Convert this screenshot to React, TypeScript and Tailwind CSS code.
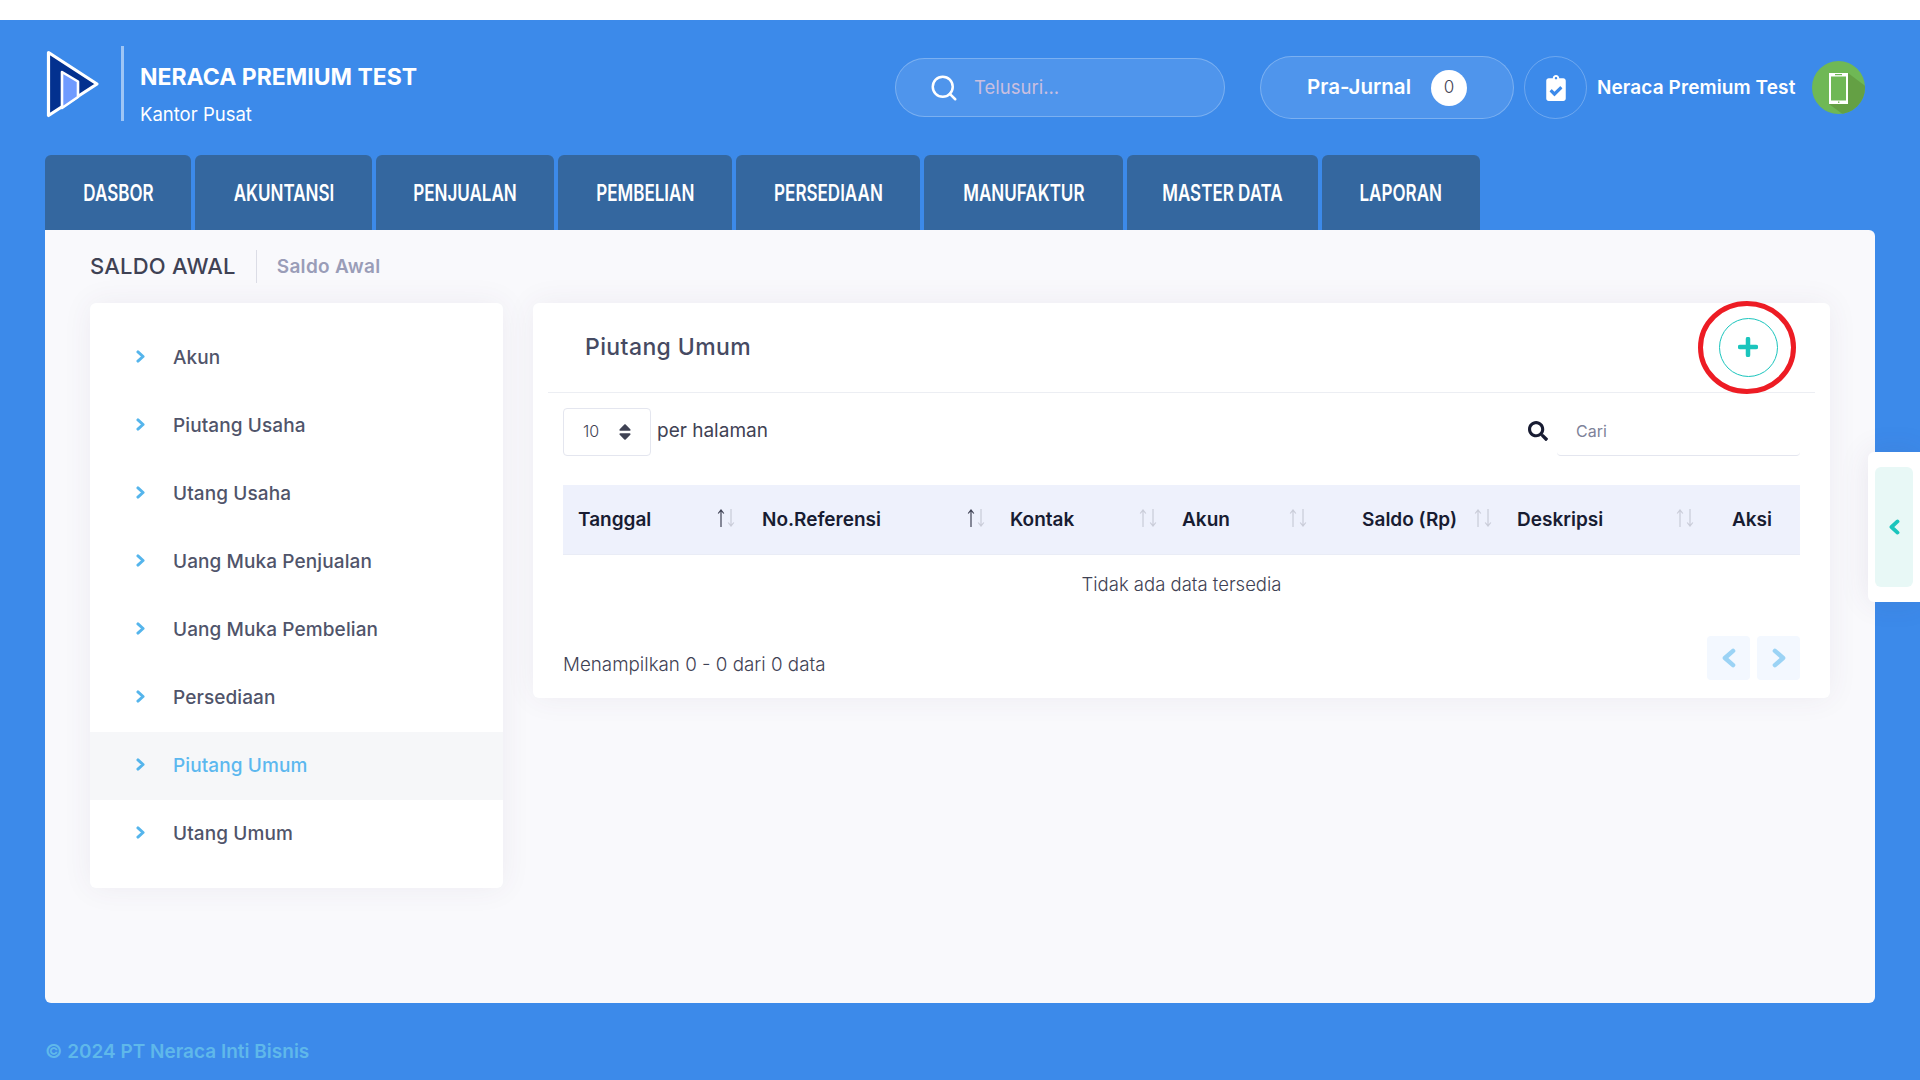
import { FaClipboardCheck, FaSearch, FaSort } from "react-icons/fa";
import { Search } from "lucide-react";

const tabs = [
    { label: "DASBOR", width: "w-[146px]" },
    { label: "AKUNTANSI", width: "w-[177px]" },
    { label: "PENJUALAN", width: "w-[178px]" },
    { label: "PEMBELIAN", width: "w-[174px]" },
    { label: "PERSEDIAAN", width: "w-[184px]" },
    { label: "MANUFAKTUR", width: "w-[199px]" },
    { label: "MASTER DATA", width: "w-[191px]" },
    { label: "LAPORAN", width: "w-[158px]" },
];

const menu = ["Akun", "Piutang Usaha", "Utang Usaha", "Uang Muka Penjualan", "Uang Muka Pembelian", "Persediaan", "Piutang Umum", "Utang Umum"];

function Chevron({ left, w, h, sw }: { left?: boolean; w: number; h: number; sw: number }) {
    const p = sw * 0.65;
    const d = left ? `M${w - p} ${p} L${p} ${h / 2} L${w - p} ${h - p}` : `M${p} ${p} L${w - p} ${h / 2} L${p} ${h - p}`;
    return (
        <svg width={w} height={h} viewBox={`0 0 ${w} ${h}`} fill="none" className="shrink-0">
            <path d={d} stroke="currentColor" strokeWidth={sw} strokeLinejoin="round" strokeLinecap="round" />
        </svg>
    );
}

function Logo() {
    return (
        <svg width="56" height="72" viewBox="0 0 56 72" className="shrink-0">
            <path d="M3.5 4.5 L52 36 L3.5 67.5 Z" fill="#03318f" stroke="#fff" strokeWidth="3.2" strokeLinejoin="round" />
            <path d="M17 24 L33 33.5 L33 49 L17 60 Z" fill="#6f9bff" stroke="#fff" strokeWidth="2.6" strokeLinejoin="round" />
        </svg>
    );
}

function Avatar() {
    return (
        <svg width="53" height="53" viewBox="0 0 53 53" className="shrink-0">
            <defs>
                <clipPath id="avatar-clip">
                    <circle cx="26.5" cy="26.5" r="26.5" />
                </clipPath>
            </defs>
            <circle cx="26.5" cy="26.5" r="26.5" fill="#6fb855" />
            <path d="M36 12 L60 30 L60 60 L40 60 L17 43 Z" fill="#64a044" clipPath="url(#avatar-clip)" />
            <rect x="17" y="12" width="19" height="31" fill="#fff" />
            <rect x="19" y="15.5" width="15" height="24" fill="#6fb855" />
            <rect x="23" y="13" width="7" height="1.2" fill="#6fb855" />
            <rect x="26" y="40.5" width="1.4" height="1.4" fill="#6fb855" />
        </svg>
    );
}

function SortArrows({ active }: { active?: boolean }) {
    return (
        <svg width="18" height="18" viewBox="0 0 18 18" className="shrink-0" fill="none" strokeWidth="1.2">
            <path d="M4 18 V1 M1.2 4.5 L4 1 L6.8 4.5" stroke={active ? "#3f4254" : "#c9ccd8"} />
            <path d="M14 0 V17 M11.2 13.5 L14 17 L16.8 13.5" stroke="#c9ccd8" />
        </svg>
    );
}

function Th({ label, width, active, pad }: { label: string; width: string; active?: boolean; pad?: string }) {
    return (
        <div className={`${width} ${pad ?? "pl-[15px]"} flex items-center justify-between pr-[10px]`}>
            <span className="mt-[1px]">{label}</span>
            <span className="-mt-[4px]">
                <SortArrows active={active} />
            </span>
        </div>
    );
}

export default function App() {
    return (
        <div className="relative h-[1080px] w-full overflow-hidden bg-[#3c8aea] [font-family:Inter,sans-serif]">
            <div className="h-[20px] bg-white"></div>

            <div className="flex h-[135px] items-center justify-between pl-[45px] pr-[55px]">
                <div className="mb-[8px] flex items-center">
                    <Logo />
                    <div className="ml-[20px] h-[75px] w-[3px] bg-white/50"></div>
                    <div className="ml-[16px] mt-[20px] flex flex-col text-white">
                        <span className="text-[23px] font-bold leading-[30px]">NERACA PREMIUM TEST</span>
                        <span className="mt-[10px] text-[18.5px] leading-[24px]">Kantor Pusat</span>
                    </div>
                </div>

                <div className="flex items-center">
                    <div className="flex h-[59px] w-[330px] items-center rounded-full border border-white/25 bg-white/10 pl-[33px]">
                        <Search size={30} strokeWidth={2} className="text-white" />
                        <span className="ml-[15px] text-[18.5px] text-[#c9bfe0]">Telusuri...</span>
                    </div>
                    <div className="ml-[35px] flex h-[63px] w-[254px] items-center rounded-full border border-white/25 bg-white/10 pl-[46px]">
                        <span className="w-[124px] whitespace-nowrap text-[20.5px] font-semibold text-white">Pra-Jurnal</span>
                        <span className="flex h-[36px] w-[36px] items-center justify-center rounded-full bg-white text-[17px] font-light text-[#3f4254]">0</span>
                    </div>
                    <div className="ml-[10px] flex h-[63px] w-[63px] items-center justify-center rounded-full border border-white/25">
                        <FaClipboardCheck size={26} className="text-white" />
                    </div>
                    <span className="ml-[10px] mt-[1px] w-[200px] whitespace-nowrap text-[19px] font-semibold tracking-[0.1px] text-white">Neraca Premium Test</span>
                    <span className="ml-[15px]">
                        <Avatar />
                    </span>
                </div>
            </div>

            <div className="ml-[45px] flex h-[75px] gap-[4px]">
                {tabs.map((tab) => (
                    <div key={tab.label} className={`${tab.width} flex items-center justify-center rounded-t-[6px] bg-[#34679f] text-white`}>
                        <span className="mt-[1px] inline-block scale-x-[0.74] whitespace-nowrap text-[23px] font-semibold">{tab.label}</span>
                    </div>
                ))}
            </div>

            <div className="ml-[45px] h-[773px] w-[1830px] rounded-b-[6px] rounded-tr-[6px] bg-[#f9f9fc] px-[45px]">
                <div className="flex h-[73px] items-center">
                    <span className="text-[22px] font-medium tracking-[0.2px] text-[#3f4254]">SALDO AWAL</span>
                    <div className="ml-[20px] h-[33px] w-[1px] bg-[#dcdde6]"></div>
                    <span className="ml-[20px] mt-[1px] text-[19px] font-semibold tracking-[0.3px] text-[#9a9db8]">Saldo Awal</span>
                </div>

                <div className="flex items-start gap-[30px]">
                    <div className="w-[413px] rounded-[6px] bg-white pb-[20px] pt-[21px] shadow-[0_0_30px_rgba(82,63,105,0.07)]">
                        {menu.map((item) => {
                            const active = item === "Piutang Umum";
                            return (
                                <div key={item} className={`flex h-[68px] items-center pl-[46px] ${active ? "bg-[#f6f7f9]" : ""}`}>
                                    <span className="mb-[3px] text-[#55b5ec]">
                                        <Chevron w={9} h={13} sw={3} />
                                    </span>
                                    <span className={`ml-[28px] text-[19px] font-medium tracking-[0.1px] ${active ? "text-[#5cb8ef]" : "text-[#50546a]"}`}>{item}</span>
                                </div>
                            );
                        })}
                    </div>

                    <div className="w-[1297px] rounded-[6px] bg-white px-[15px] pb-[18px] shadow-[0_0_30px_rgba(82,63,105,0.07)]">
                        <div className="flex h-[90px] items-center justify-between border-b border-[#eceef3] pl-[37px] pr-[37px]">
                            <span className="text-[23px] font-medium tracking-[0.4px] text-[#464a62]">Piutang Umum</span>
                            <button className="relative flex h-[59px] w-[59px] items-center justify-center rounded-full border border-[#1bc5bd] text-[#1bc5bd]">
                                <svg width="20" height="20" viewBox="0 0 20 20" fill="none" className="-translate-x-px -translate-y-px">
                                    <path d="M10 2 V18 M2 10 H18" stroke="currentColor" strokeWidth="4.5" strokeLinecap="round" />
                                </svg>
                                <svg width="98" height="93" viewBox="0 0 98 93" fill="none" className="absolute left-[-22px] top-[-18px]">
                                    <ellipse cx="49" cy="46.5" rx="46.5" ry="44" stroke="#ed1c24" strokeWidth="5" />
                                </svg>
                            </button>
                        </div>

                        <div className="px-[15px]">
                            <div className="mt-[15px] flex h-[48px] items-center justify-between">
                                <div className="flex items-center">
                                    <div className="flex h-[48px] w-[88px] items-center justify-between rounded-[4px] border border-[#e4e6ef] pl-[19px] pr-[15px] text-[16px] font-light text-[#3f4254]">
                                        <span className="mb-[2px]">10</span>
                                        <FaSort size={20} className="mb-[1px]" />
                                    </div>
                                    <span className="mb-[2px] ml-[6px] text-[19px] text-[#3f4254]">per halaman</span>
                                </div>
                                <div className="flex items-center">
                                    <FaSearch size={20} className="mb-[2px] text-[#181c32]" />
                                    <div className="ml-[9px] flex h-[48px] w-[243px] items-center rounded-[4px] border-b border-[#e4e6ef] pb-[2px] pl-[19px] text-[16px] text-[#7e8299]">Cari</div>
                                </div>
                            </div>

                            <div className="mt-[29px] flex h-[70px] items-center border-b border-[#e9ecf6] bg-[#eef1fc] text-[19px] font-semibold text-[#181c32]">
                                <Th label="Tanggal" width="w-[182px]" active />
                                <Th label="No.Referensi" width="w-[250px]" active pad="pl-[17px]" />
                                <Th label="Kontak" width="w-[172px]" />
                                <Th label="Akun" width="w-[150px]" />
                                <div className="flex w-[185px] items-center justify-end gap-[17px] pr-[10px]">
                                    <span className="mt-[1px]">Saldo (Rp)</span>
                                    <span className="-mt-[4px]">
                                        <SortArrows />
                                    </span>
                                </div>
                                <Th label="Deskripsi" width="w-[202px]" />
                                <div className="mt-[1px] flex-1 text-center">Aksi</div>
                            </div>

                            <div className="flex h-[58px] items-center justify-center pt-[2px] text-[18.5px] font-light text-[#3f4254]">Tidak ada data tersedia</div>

                            <div className="mt-[23px] flex h-[44px] items-center justify-between">
                                <span className="mt-[14px] text-[18.8px] font-light text-[#3f4254]">Menampilkan 0 - 0 dari 0 data</span>
                                <div className="flex gap-[7px]">
                                    <div className="flex h-[44px] w-[43px] items-center justify-center rounded-[4px] bg-[#f3f8ff] text-[#9bd3f5]">
                                        <Chevron left w={14} h={20} sw={4.5} />
                                    </div>
                                    <div className="flex h-[44px] w-[43px] items-center justify-center rounded-[4px] bg-[#f3f8ff] text-[#9bd3f5]">
                                        <Chevron w={14} h={20} sw={4.5} />
                                    </div>
                                </div>
                            </div>
                        </div>
                    </div>
                </div>
            </div>

            <div className="ml-[45px] mt-[37px] text-[19px] font-semibold leading-[24px] text-[#5fb8ea]">© 2024 PT Neraca Inti Bisnis</div>

            <div className="absolute right-0 top-[452px] flex h-[150px] w-[52px] items-center rounded-l-[6px] bg-white pl-[7px] shadow-[0_0_30px_rgba(82,63,105,0.1)]">
                <div className="flex h-[120px] w-[38px] items-center justify-center rounded-[6px] bg-[#e8f8f6] text-[#1bc5bd]">
                    <Chevron left w={11} h={16} sw={3.8} />
                </div>
            </div>
        </div>
    );
}
